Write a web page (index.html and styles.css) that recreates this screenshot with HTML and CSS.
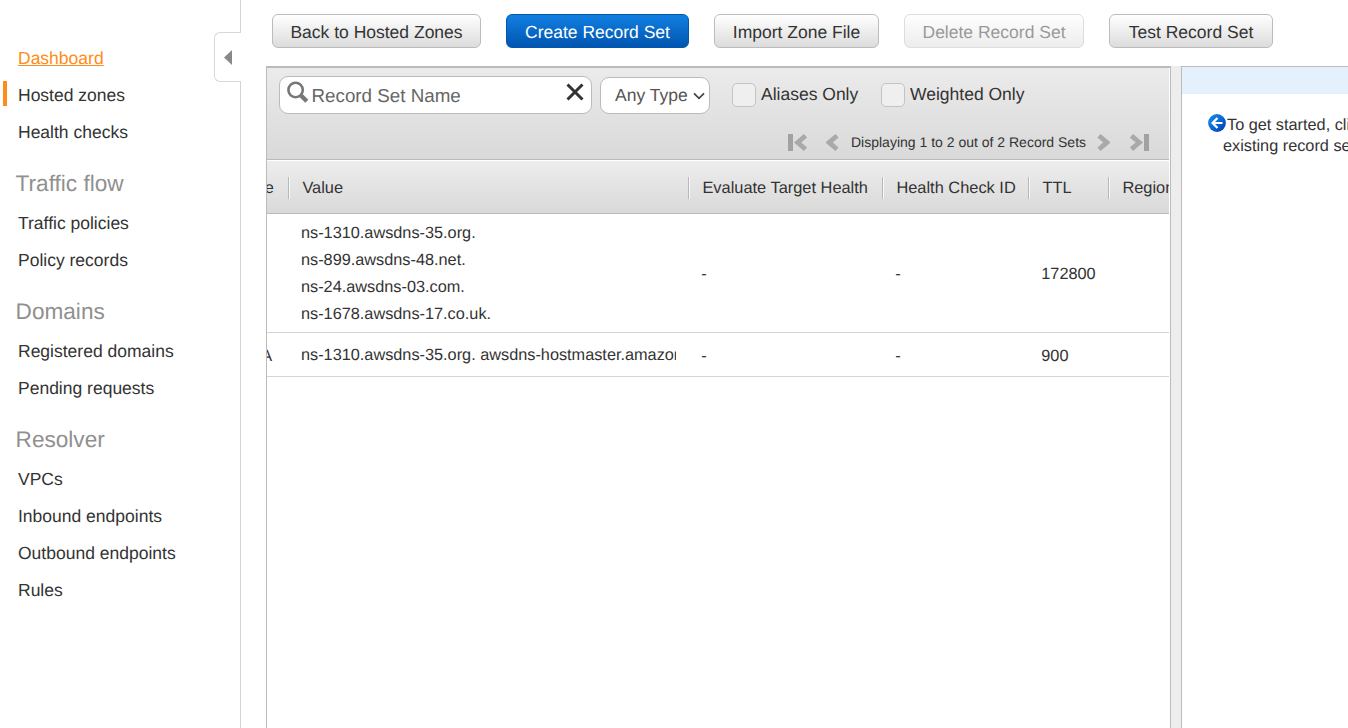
FILE: index.html
```html
<!DOCTYPE html>
<html lang="en">
<head>
<meta charset="utf-8">
<title>Route 53 Record Sets</title>
<link rel="stylesheet" href="styles.css">
</head>
<body>
<div class="app">
  <nav class="sidebar">
    <a class="nav-item link">Dashboard</a>
    <a class="nav-item current">Hosted zones</a>
    <a class="nav-item">Health checks</a>
    <h2 class="nav-title">Traffic flow</h2>
    <a class="nav-item">Traffic policies</a>
    <a class="nav-item">Policy records</a>
    <h2 class="nav-title">Domains</h2>
    <a class="nav-item">Registered domains</a>
    <a class="nav-item">Pending requests</a>
    <h2 class="nav-title">Resolver</h2>
    <a class="nav-item">VPCs</a>
    <a class="nav-item">Inbound endpoints</a>
    <a class="nav-item">Outbound endpoints</a>
    <a class="nav-item">Rules</a>
    <div class="collapse"><svg width="8" height="15" viewBox="0 0 8 15"><path d="M8 0v15L0 7.5z" fill="#888"/></svg></div>
  </nav>
  <main class="main">
    <div class="toolbar">
      <button class="btn w-back">Back to Hosted Zones</button>
      <button class="btn primary w-create">Create Record Set</button>
      <button class="btn w-import">Import Zone File</button>
      <button class="btn disabled w-delete">Delete Record Set</button>
      <button class="btn w-test">Test Record Set</button>
    </div>
    <div class="panes">
      <section class="records">
        <div class="filters">
          <div class="filter-row">
            <div class="search">
              <svg class="lens" width="22" height="23" viewBox="0 0 22 23" fill="none" stroke="#777"><circle cx="8.6" cy="9" r="7.2" stroke-width="2.6"/><path d="M14 14.500l5.800 5.700" stroke-width="4.400"/></svg>
              <span class="search-text">Record Set Name</span>
              <svg class="clear" width="18" height="18" viewBox="0 0 18 18"><path d="M1.500 1.500l15 15M16.500 1.500l-15 15" stroke="#333" stroke-width="3"/></svg>
            </div>
            <div class="select"><span>Any Type</span><svg width="12" height="8" viewBox="0 0 12 8"><path d="M1 1.300l5 5 5-5" fill="none" stroke="#444" stroke-width="1.800"/></svg></div>
            <label class="check aliases"><i class="box"></i>Aliases Only</label>
            <label class="check"><i class="box"></i>Weighted Only</label>
          </div>
          <div class="pager">
            <svg class="first" width="20" height="18" viewBox="0 0 20 18"><path d="M0 0h5v17H0z" fill="#a2a2a2"/><path d="M17.500 1.800L9.700 8.500l7.800 6.700" fill="none" stroke="#a9a9a9" stroke-width="4.800"/></svg>
            <svg class="prev" width="13" height="18" viewBox="0 0 13 18"><path d="M11 1.800L3.200 8.500 11 15.200" fill="none" stroke="#a9a9a9" stroke-width="4.800"/></svg>
            <span class="pager-text">Displaying 1 to 2 out of 2 Record Sets</span>
            <svg class="next" width="13" height="18" viewBox="0 0 13 18"><path d="M2 1.800L9.800 8.500 2 15.200" fill="none" stroke="#a9a9a9" stroke-width="4.800"/></svg>
            <svg class="last" width="20" height="18" viewBox="0 0 20 18"><path d="M14 0h5v17h-5z" fill="#a2a2a2"/><path d="M1.500 1.800L9.300 8.500 1.500 15.200" fill="none" stroke="#a9a9a9" stroke-width="4.800"/></svg>
          </div>
        </div>
        <div class="grid head">
          <div class="cell clip-left"><span>Type</span></div>
          <div class="cell">Value</div>
          <div class="cell">Evaluate Target Health</div>
          <div class="cell">Health Check ID</div>
          <div class="cell">TTL</div>
          <div class="cell">Region</div>
        </div>
        <div class="grid row tall">
          <div class="cell"></div>
          <div class="cell value"><p>ns-1310.awsdns-35.org.</p><p>ns-899.awsdns-48.net.</p><p>ns-24.awsdns-03.com.</p><p>ns-1678.awsdns-17.co.uk.</p></div>
          <div class="cell">-</div>
          <div class="cell">-</div>
          <div class="cell">172800</div>
          <div class="cell"></div>
        </div>
        <div class="grid row short">
          <div class="cell clip-left"><span>SOA</span></div>
          <div class="cell value"><p>ns-1310.awsdns-35.org. awsdns-hostmaster.amazon</p></div>
          <div class="cell">-</div>
          <div class="cell">-</div>
          <div class="cell">900</div>
          <div class="cell"></div>
        </div>
      </section>
      <div class="splitter"></div>
      <aside class="detail">
        <div class="detail-bar"></div>
        <div class="hint">
          <div class="hint-line first-line"><svg width="18" height="18" viewBox="0 0 18 18"><defs><linearGradient id="g" x1="0" y1="0" x2="1" y2="1"><stop offset="0" stop-color="#168be6"/><stop offset=".5" stop-color="#0b6bd8"/><stop offset="1" stop-color="#0635a8"/></linearGradient></defs><circle cx="9" cy="9" r="8.900" fill="url(#g)"/><path d="M14.500 9H5M9.500 4L4.500 9l5 5" fill="none" stroke="#fff" stroke-width="2.200"/></svg><span>To get started, click</span></div>
          <div class="hint-line">existing record set</div>
        </div>
      </aside>
    </div>
  </main>
</div>
</body>
</html>
```
FILE: styles.css
```css
* { box-sizing: border-box; }
body {
  margin: 0;
  background: #fff;
  color: #333;
  font-family: "Liberation Sans", Arial, sans-serif;
  font-size: 16.3px;
  text-rendering: geometricPrecision;
  overflow: hidden;
}
svg { display: block; flex: none; }
p { margin: 0; }
.app { display: flex; width: 1348px; height: 728px; overflow: hidden; }

.sidebar {
  position: relative;
  flex: none;
  width: 241px;
  padding-top: 40px;
  border-right: 1px solid #d3d3d3;
}
.nav-item {
  display: block;
  height: 37px;
  padding-left: 18px;
  line-height: 36px;
  font-size: 17.5px;
}
.link { color: #ff8c14; text-decoration: underline; }
.current { background: linear-gradient(#ff8c14, #ff8c14) 3px 4px / 4px 25px no-repeat; }
.nav-title {
  height: 54px;
  margin: 0;
  padding-left: 15.6px;
  line-height: 65px;
  font-size: 22.6px;
  font-weight: normal;
  color: #909090;
}
.collapse {
  position: absolute;
  top: 32px;
  right: -1px;
  width: 27px;
  height: 50px;
  padding: 17px 0 0 9px;
  border: 1px solid #d8d8d8;
  border-right: 0;
  border-radius: 6px 0 0 6px;
  background: #fff;
}

.main { flex: 1; min-width: 0; padding-left: 25px; }
.toolbar { display: flex; gap: 25px; height: 66px; padding: 14px 0 0 6px; }
.btn {
  flex: none;
  height: 34px;
  padding: 0;
  border: 1px solid #bcbcbc;
  border-radius: 6px;
  background: linear-gradient(#fff, #dcdcdc);
  color: #333;
  font-family: inherit;
  font-size: 17.5px;
  line-height: 34px;
  text-rendering: inherit;
}
.primary {
  border-color: #0058ad;
  background: linear-gradient(#1180e2, #0055b0);
  color: #fff;
}
.disabled { opacity: .5; }
.w-back { width: 209px; }
.w-create { width: 183px; }
.w-import { width: 165px; }
.w-delete { width: 180px; }
.w-test { width: 164px; }

.panes { display: flex; height: 662px; }
.records {
  flex: none;
  width: 905px;
  padding-right: 1px;
  border: 1px solid #bbb;
  border-top: 2px solid #bbb;
  border-bottom: 0;
  overflow: hidden;
}
.filters {
  height: 92px;
  padding: 8px 0 0 12px;
  border-bottom: 1px solid #bbb;
  background: linear-gradient(#ebebeb, #d9d9d9);
}
.filter-row { display: flex; height: 38px; }
.search {
  display: flex;
  width: 313px;
  height: 38px;
  padding: 0 7px;
  border: 1px solid #bbb;
  border-radius: 9px;
  background: #fff;
}
.lens { margin-top: 4px; }
.search-text { flex: 1; padding-left: 2.5px; color: #666; font-size: 18.8px; line-height: 38px; }
.clear { margin-top: 6px; }
.select {
  display: flex;
  align-items: center;
  gap: 5px;
  width: 110px;
  height: 37px;
  margin: 1px 22px 0 8px;
  padding-left: 14px;
  border: 1px solid #bbb;
  border-radius: 9px;
  background: #fff;
  color: #555;
  font-size: 17.5px;
}
.check { display: flex; gap: 5px; font-size: 17.5px; line-height: 36px; }
.aliases { width: 149px; }
.box {
  width: 24px;
  height: 24px;
  margin-top: 7px;
  border: 1px solid #c3c3c3;
  border-radius: 5px;
  background: #efefef;
}
.pager { display: flex; height: 45px; padding: 20px 0 0 509px; font-size: 14px; }
.pager-text { width: 235px; margin: 0 11px 0 12px; line-height: 16px; white-space: nowrap; }
.prev { margin-left: 18px; }
.last { margin-left: 20px; }

.grid { display: grid; grid-template-columns: 21px 400px 194px 146px 80px 61px; overflow: hidden; }
.cell { min-width: 0; white-space: nowrap; overflow: hidden; }
.clip-left { display: flex; justify-content: flex-end; padding-right: 14px; }
.head {
  height: 54px;
  padding-top: 16px;
  border-top: 1px solid #fff;
  border-bottom: 1px solid #bbb;
  background: linear-gradient(#ededed, #d9d9d9);
  font-size: 16.4px;
  line-height: 22px;
}
.head .cell { height: 22px; padding-left: 13.400px; border-left: 1px solid #b8b8b8; box-shadow: inset 1px 0 #f8f8f8; }
.head .clip-left { padding: 0 14px 0 0; border: 0; box-shadow: none; }
.row { border-bottom: 1px solid #d4d4d4; }
.row .cell { padding-left: 13.300px; }
.row .value { padding: 0; margin: 0 12px 0 13px; }
.tall { height: 119px; line-height: 120px; }
.tall .value { padding-top: 6px; line-height: 27px; }
.short { height: 44px; line-height: 46px; }
.short .value { line-height: 45px; }
.row .clip-left { padding: 0 16px 0 0; }

.splitter { flex: none; width: 10px; background: #ededed; }
.detail { flex: 1; min-width: 0; border-top: 1px solid #bbb; border-left: 1px solid #bbb; overflow: hidden; }
.detail-bar { height: 27px; background: #e4f0fc; }
.hint { padding: 20px 0 0 41px; line-height: 21px; font-size: 16.3px; white-space: nowrap; }
.hint-line { padding-top: 1px; height: 21px; }
.first-line { display: flex; gap: 1px; margin-left: -15px; padding-top: 0; }
.first-line span { padding-top: 1px; }
```
